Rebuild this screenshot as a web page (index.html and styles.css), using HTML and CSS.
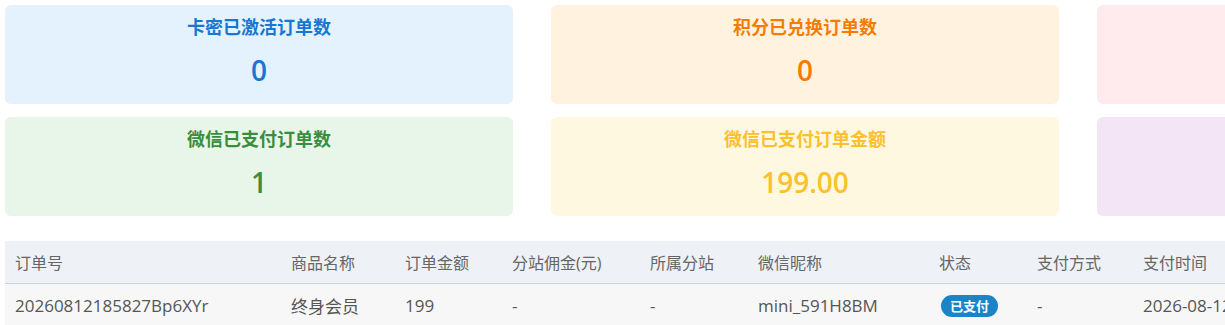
FILE: index.html
```html
<!DOCTYPE html>
<html lang="zh-CN">
<head>
    <meta charset="UTF-8">
    <meta name="viewport" content="width=device-width, initial-scale=1.0">
    <title>订单统计</title>
    <link rel="stylesheet" href="styles.css">
</head>
<body>

    <div class="page">
        <div class="stats">
            <div class="stat stat-blue">
                <div class="stat-title">卡密已激活订单数</div>
                <div class="stat-value">0</div>
            </div>
            <div class="stat stat-orange">
                <div class="stat-title">积分已兑换订单数</div>
                <div class="stat-value">0</div>
            </div>
            <div class="stat stat-red">
                <div class="stat-title">分站订单数</div>
                <div class="stat-value">0</div>
            </div>
            <div class="stat stat-green">
                <div class="stat-title">微信已支付订单数</div>
                <div class="stat-value">1</div>
            </div>
            <div class="stat stat-yellow">
                <div class="stat-title">微信已支付订单金额</div>
                <div class="stat-value">199.00</div>
            </div>
            <div class="stat stat-purple">
                <div class="stat-title">订单分站已结算佣金总金额(元)</div>
                <div class="stat-value">0.00</div>
            </div>
        </div>

        <table class="orders">
            <thead>
                <tr>
                    <th class="col-no">订单号</th>
                    <th class="col-goods">商品名称</th>
                    <th class="col-amount">订单金额</th>
                    <th class="col-fee">分站佣金(元)</th>
                    <th class="col-site">所属分站</th>
                    <th class="col-nick">微信昵称</th>
                    <th class="col-status">状态</th>
                    <th class="col-pay">支付方式</th>
                    <th class="col-time">支付时间</th>
                    <th class="col-time">创建时间</th>
                    <th>操作</th>
                </tr>
            </thead>
            <tbody>
                <tr>
                    <td>20260812185827Bp6XYr</td>
                    <td>终身会员</td>
                    <td>199</td>
                    <td>-</td>
                    <td>-</td>
                    <td>mini_591H8BM</td>
                    <td><span class="badge">已支付</span></td>
                    <td>-</td>
                    <td>2026-08-12 18:58:35</td>
                    <td>2026-08-12 18:58:27</td>
                    <td>详情</td>
                </tr>
            </tbody>
        </table>
    </div>

</body>
</html>
```

FILE: styles.css
```css
body {
    font-family: "Open Sans", "Noto Sans CJK SC", sans-serif;
    background-color: #fff;
    margin: 0;
    overflow: hidden;
}
.page {
    width: 1602px;
    padding: 5px;
}
.stats {
    display: grid;
    grid-template-columns: repeat(3, 508px);
    column-gap: 38px;
    row-gap: 13px;
}
.stat {
    box-sizing: border-box;
    height: 99px;
    padding: 10px 10px 0;
    border-radius: 6px;
    text-align: center;
}
.stat-title {
    font-size: 18px;
    font-weight: bold;
    line-height: 24px;
}
.stat-value {
    margin-top: 13px;
    font-size: 28px;
    font-weight: 600;
    line-height: 36px;
}
.stat-blue { background-color: #e3f2fd; color: #1976d2; }
.stat-orange { background-color: #fff3e0; color: #f57c00; }
.stat-red { background-color: #ffebee; color: #d32f2f; }
.stat-green { background-color: #e8f5e9; color: #388e3c; }
.stat-yellow { background-color: #fff8e1; color: #fbc02d; }
.stat-purple { background-color: #f3e5f5; color: #7b1fa2; }

.orders {
    margin-top: 25px;
    width: 1602px;
    table-layout: fixed;
    border-collapse: collapse;
    font-size: 16px;
}
.orders th,
.orders td {
    box-sizing: border-box;
    height: 42px;
    padding: 0 10px;
    text-align: left;
    white-space: nowrap;
    overflow: hidden;
}
.orders th {
    background-color: #eef1f5;
    color: #666;
    font-weight: normal;
    border-bottom: 1px solid #cdd2d8;
}
.orders td {
    padding-top: 2px;
    background-color: #f7f7f7;
    color: #555;
    font-size: 17px;
}
.col-no { width: 276px; }
.col-goods { width: 114px; }
.col-amount { width: 107px; }
.col-fee { width: 138px; }
.col-site { width: 108px; }
.col-nick { width: 181px; }
.col-status { width: 98px; }
.col-pay { width: 106px; }
.col-time { width: 190px; }
.badge {
    display: inline-block;
    margin-left: 2px;
    padding: 0 9px;
    line-height: 22px;
    border-radius: 11px;
    background-color: #1a84c7;
    color: #fff;
    font-size: 13px;
    font-weight: bold;
}
```
